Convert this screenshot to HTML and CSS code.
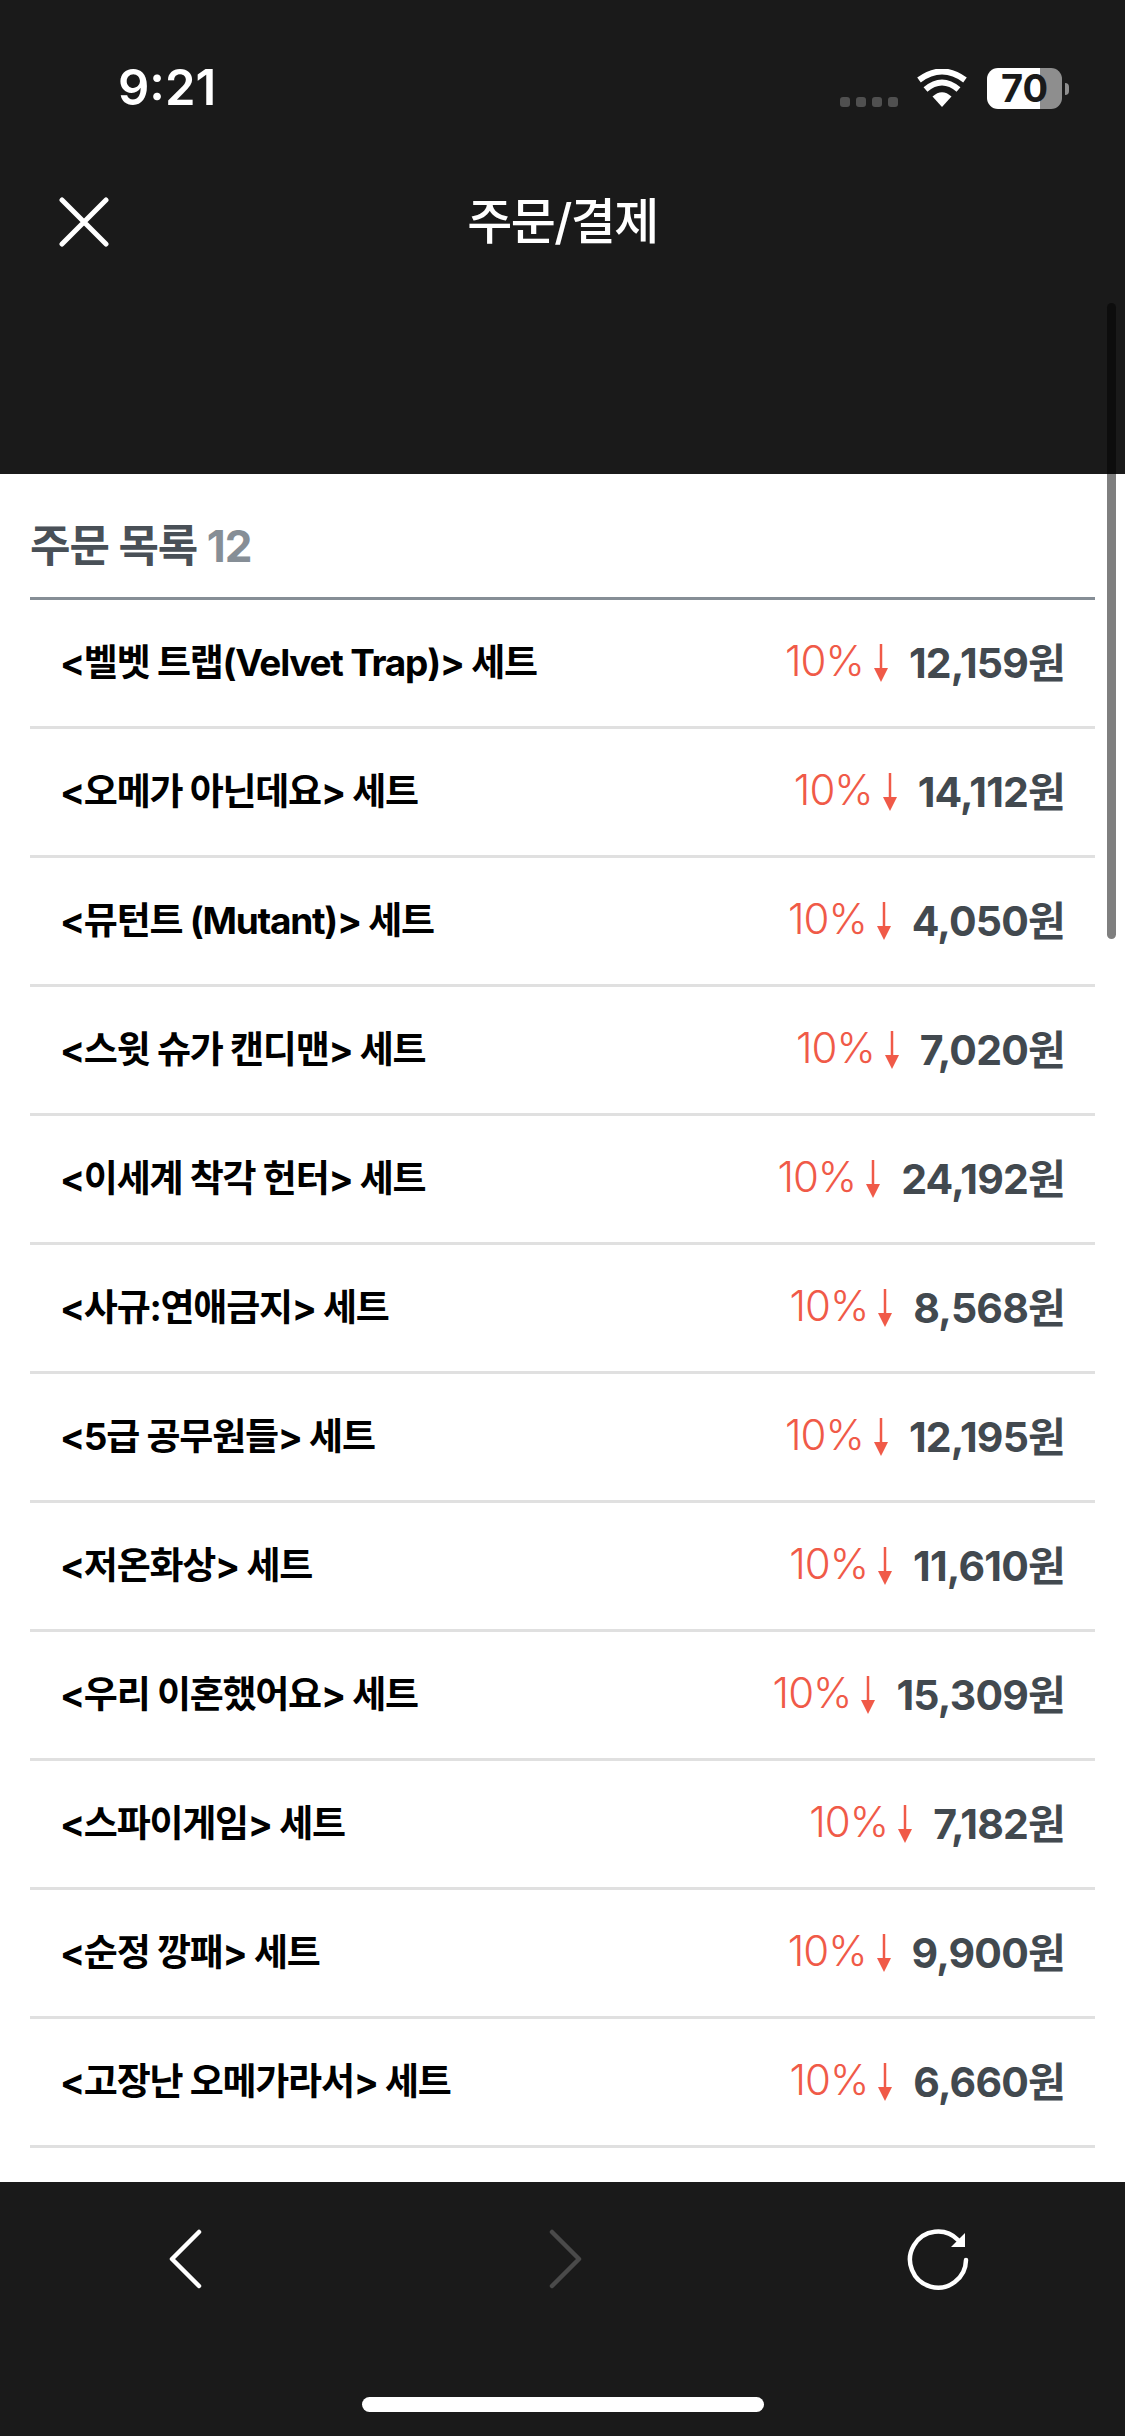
FILE: index.html
```html
<!DOCTYPE html>
<html>
<head>
    <title>주문/결제</title>
    <link rel="stylesheet" href="styles.css">
</head>
<body>
    <div class="screen">
        <div class="top">
            <div class="status">
                <span class="time">9:21</span>
                <div class="status-icons">
                    <div class="signal"><i></i><i></i><i></i><i></i></div>
                    <svg class="wifi" width="50" height="38" viewBox="0 0 50 38">
                        <path d="M25 38 L15.5 27.5 Q25 19 34.5 27.5 Z" fill="#fff"/>
                        <path d="M8.5 20.5 Q25 6.5 41.5 20.5" fill="none" stroke="#fff" stroke-width="6"/>
                        <path d="M2 11 Q25 -6 48 11" fill="none" stroke="#fff" stroke-width="6"/>
                    </svg>
                    <div class="battery">
                        <div class="battery-body"><span>70</span></div>
                        <div class="battery-tip"></div>
                    </div>
                </div>
            </div>
            <div class="nav">
                <button class="close">
                    <svg width="50" height="50" viewBox="0 0 50 50"><path d="M3 3 L47 47 M47 3 L3 47" stroke="#fff" stroke-width="5" stroke-linecap="round"/></svg>
                </button>
                <h1>주문/결제</h1>
            </div>
        </div>

        <div class="content">
            <h2>주문 목록 <span>12</span></h2>
            <ul class="orders">
                <li><span class="name">&lt;벨벳 트랩(Velvet Trap)&gt; 세트</span><span class="sale">10%<svg class="down" width="14" height="38" viewBox="0 0 14 38"><path d="M7 0 V26" stroke="#f05a48" stroke-width="2.5"/><path d="M0 24 H14 L7 38 Z" fill="#f05a48"/></svg></span><span class="price">12,159원</span></li>
                <li><span class="name">&lt;오메가 아닌데요&gt; 세트</span><span class="sale">10%<svg class="down" width="14" height="38" viewBox="0 0 14 38"><path d="M7 0 V26" stroke="#f05a48" stroke-width="2.5"/><path d="M0 24 H14 L7 38 Z" fill="#f05a48"/></svg></span><span class="price">14,112원</span></li>
                <li><span class="name">&lt;뮤턴트 (Mutant)&gt; 세트</span><span class="sale">10%<svg class="down" width="14" height="38" viewBox="0 0 14 38"><path d="M7 0 V26" stroke="#f05a48" stroke-width="2.5"/><path d="M0 24 H14 L7 38 Z" fill="#f05a48"/></svg></span><span class="price">4,050원</span></li>
                <li><span class="name">&lt;스윗 슈가 캔디맨&gt; 세트</span><span class="sale">10%<svg class="down" width="14" height="38" viewBox="0 0 14 38"><path d="M7 0 V26" stroke="#f05a48" stroke-width="2.5"/><path d="M0 24 H14 L7 38 Z" fill="#f05a48"/></svg></span><span class="price">7,020원</span></li>
                <li><span class="name">&lt;이세계 착각 헌터&gt; 세트</span><span class="sale">10%<svg class="down" width="14" height="38" viewBox="0 0 14 38"><path d="M7 0 V26" stroke="#f05a48" stroke-width="2.5"/><path d="M0 24 H14 L7 38 Z" fill="#f05a48"/></svg></span><span class="price">24,192원</span></li>
                <li><span class="name">&lt;사규:연애금지&gt; 세트</span><span class="sale">10%<svg class="down" width="14" height="38" viewBox="0 0 14 38"><path d="M7 0 V26" stroke="#f05a48" stroke-width="2.5"/><path d="M0 24 H14 L7 38 Z" fill="#f05a48"/></svg></span><span class="price">8,568원</span></li>
                <li><span class="name">&lt;5급 공무원들&gt; 세트</span><span class="sale">10%<svg class="down" width="14" height="38" viewBox="0 0 14 38"><path d="M7 0 V26" stroke="#f05a48" stroke-width="2.5"/><path d="M0 24 H14 L7 38 Z" fill="#f05a48"/></svg></span><span class="price">12,195원</span></li>
                <li><span class="name">&lt;저온화상&gt; 세트</span><span class="sale">10%<svg class="down" width="14" height="38" viewBox="0 0 14 38"><path d="M7 0 V26" stroke="#f05a48" stroke-width="2.5"/><path d="M0 24 H14 L7 38 Z" fill="#f05a48"/></svg></span><span class="price">11,610원</span></li>
                <li><span class="name">&lt;우리 이혼했어요&gt; 세트</span><span class="sale">10%<svg class="down" width="14" height="38" viewBox="0 0 14 38"><path d="M7 0 V26" stroke="#f05a48" stroke-width="2.5"/><path d="M0 24 H14 L7 38 Z" fill="#f05a48"/></svg></span><span class="price">15,309원</span></li>
                <li><span class="name">&lt;스파이게임&gt; 세트</span><span class="sale">10%<svg class="down" width="14" height="38" viewBox="0 0 14 38"><path d="M7 0 V26" stroke="#f05a48" stroke-width="2.5"/><path d="M0 24 H14 L7 38 Z" fill="#f05a48"/></svg></span><span class="price">7,182원</span></li>
                <li><span class="name">&lt;순정 깡패&gt; 세트</span><span class="sale">10%<svg class="down" width="14" height="38" viewBox="0 0 14 38"><path d="M7 0 V26" stroke="#f05a48" stroke-width="2.5"/><path d="M0 24 H14 L7 38 Z" fill="#f05a48"/></svg></span><span class="price">9,900원</span></li>
                <li><span class="name">&lt;고장난 오메가라서&gt; 세트</span><span class="sale">10%<svg class="down" width="14" height="38" viewBox="0 0 14 38"><path d="M7 0 V26" stroke="#f05a48" stroke-width="2.5"/><path d="M0 24 H14 L7 38 Z" fill="#f05a48"/></svg></span><span class="price">6,660원</span></li>
            </ul>
        </div>

        <div class="bottom">
            <div class="toolbar">
                <svg width="40" height="60" viewBox="0 0 40 60"><path d="M31 3 L4 30 L31 57" fill="none" stroke="#fff" stroke-width="4.5" stroke-linecap="round" stroke-linejoin="round"/></svg>
                <svg width="40" height="60" viewBox="0 0 40 60"><path d="M9 3 L36 30 L9 57" fill="none" stroke="#4a4a4a" stroke-width="4.5" stroke-linecap="round" stroke-linejoin="round"/></svg>
                <svg width="64" height="64" viewBox="0 0 64 64"><path d="M52 13 A28 28 0 1 0 60 33" fill="none" stroke="#fff" stroke-width="4.5" stroke-linecap="round"/><path d="M59 6 V20 H45 Z" fill="#fff"/></svg>
            </div>
            <div class="home"></div>
        </div>

        <div class="scrollbar"></div>
    </div>
</body>
</html>
```
FILE: styles.css
```css
* {
    box-sizing: border-box;
}
html, body {
    margin: 0;
    padding: 0;
}
body {
    background: #fff;
    font-family: Inter, "Noto Sans CJK KR", sans-serif;
}
.screen {
    position: relative;
    width: 1125px;
    height: 2436px;
    display: flex;
    flex-direction: column;
    overflow: hidden;
}
.top {
    height: 474px;
    background: #1a1a1a;
    color: #fff;
}
.status {
    height: 110px;
    padding: 63px 56px 0 118px;
    display: flex;
    justify-content: space-between;
    align-items: flex-start;
}
.time {
    font-size: 49px;
    line-height: 50px;
    font-weight: 600;
}
.status-icons {
    display: flex;
    align-items: flex-end;
    margin-top: 5px;
}
.signal {
    display: flex;
    gap: 6px;
    margin-bottom: 2px;
}
.signal i {
    width: 10px;
    height: 10px;
    border-radius: 3px;
    background: #505050;
}
.wifi {
    margin-left: 19px;
    margin-bottom: 2px;
}
.battery {
    display: flex;
    align-items: center;
    margin-left: 20px;
}
.battery-body {
    width: 75px;
    height: 41px;
    border-radius: 11px;
    background: linear-gradient(to right, #fff 53px, #8e8e8e 53px);
    color: #1a1a1a;
    font-size: 38px;
    line-height: 41px;
    font-weight: 700;
    padding-left: 14px;
    white-space: nowrap;
}
.battery-tip {
    width: 4px;
    height: 12px;
    margin-left: 3px;
    border-radius: 0 6px 6px 0;
    background: #8e8e8e;
}
.nav {
    position: relative;
    display: flex;
    justify-content: center;
    padding-top: 83px;
}
.close {
    position: absolute;
    left: 59px;
    top: 87px;
    padding: 0;
    border: none;
    background: none;
    line-height: 0;
}
.nav h1 {
    margin: 0;
    font-size: 49px;
    line-height: 58px;
    font-weight: 500;
    letter-spacing: -1.6px;
}
.content {
    flex: 1;
    padding: 0 30px;
    background: #fff;
}
.content h2 {
    margin: 0;
    height: 126px;
    padding-top: 44px;
    border-bottom: 3px solid #868e96;
    color: #495057;
    font-size: 44px;
    line-height: 56px;
    font-weight: 700;
    letter-spacing: -1px;
}
.content h2 span {
    color: #868e96;
}
.orders {
    list-style: none;
    margin: 0;
    padding: 0;
}
.orders li {
    height: 129px;
    padding: 0 30px 6px 30px;
    border-bottom: 3px solid #e0e0e0;
    display: flex;
    align-items: center;
}
.name {
    flex: 1;
    color: #000;
    font-size: 37px;
    font-weight: 700;
    letter-spacing: -1.25px;
}
.sale {
    display: flex;
    align-items: center;
    color: #f05a48;
    font-size: 42px;
    font-weight: 300;
    letter-spacing: -1px;
}
.down {
    margin-left: 10px;
    margin-top: 6px;
}
.price {
    margin-left: 21px;
    color: #42494f;
    font-size: 41px;
    font-weight: 700;
    letter-spacing: -0.8px;
}
.bottom {
    height: 254px;
    background: #1a1a1a;
    position: relative;
}
.toolbar {
    display: grid;
    grid-template-columns: repeat(3, 1fr);
    justify-items: center;
    align-items: center;
    padding-top: 45px;
}
.home {
    position: absolute;
    left: 362px;
    top: 215px;
    width: 402px;
    height: 15px;
    border-radius: 8px;
    background: #fff;
}
.scrollbar {
    position: absolute;
    left: 1107px;
    top: 303px;
    width: 9px;
    height: 636px;
    border-radius: 5px;
    background: rgba(0,0,0,0.5);
}
```
